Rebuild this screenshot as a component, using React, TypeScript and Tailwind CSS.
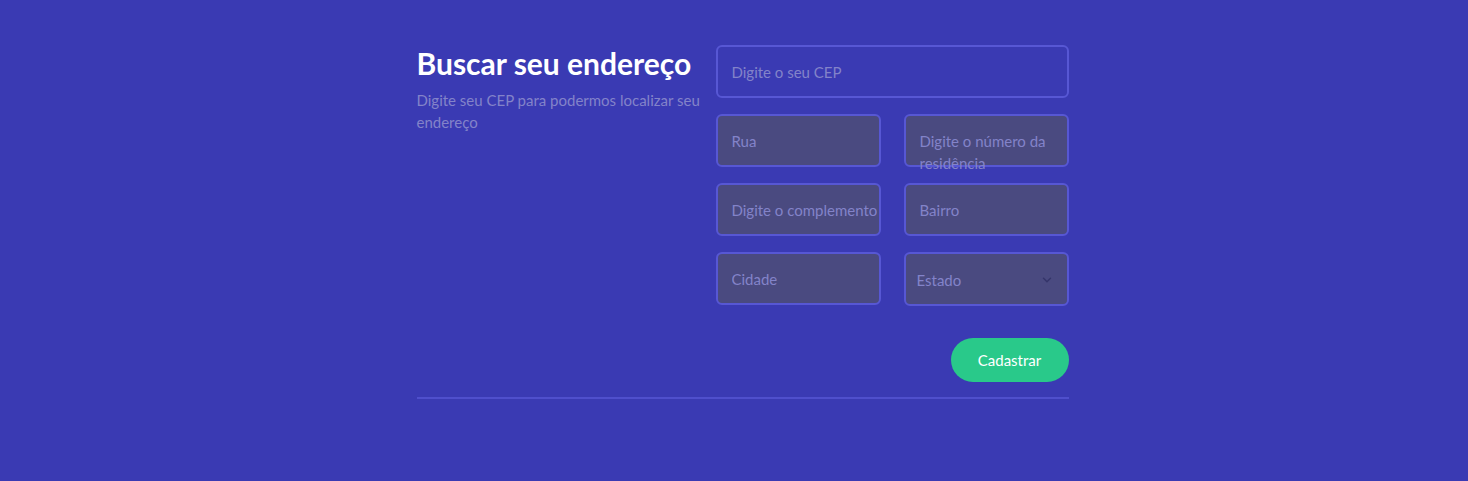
import React from 'react';

const field = 'h-[53px] rounded-md border-2 border-[#5757d4] bg-[#4a4a80] pl-[14px] pr-[2px] text-[15px] text-white placeholder:text-[#8383c9] outline-none';

const App: React.FC = () => {
  return (
    <div className="min-h-screen bg-[#3a3ab3] pl-[17px] pt-[45px] font-['Lato',sans-serif]">
      <div className="mx-auto w-[652px]">
        <div className="flex gap-[16px]">
          {/* Intro */}
          <div className="w-[283px] shrink-0">
            <h1 className="text-[30px] font-bold leading-[36px] text-white">Buscar seu endereço</h1>
            <p className="mt-[8px] w-[296px] text-[15px] leading-[22px] text-[#8383c9]">
              Digite seu CEP para podermos localizar seu endereço
            </p>
          </div>

          {/* Form */}
          <div className="flex w-[353px] flex-col gap-[16px]">
            <input
              className="h-[53px] rounded-md border-2 border-[#5757d4] bg-transparent px-[14px] text-[15px] text-white placeholder:text-[#8383c9] outline-none"
              placeholder="Digite o seu CEP"
            />
            <div className="grid grid-cols-2 gap-x-[23px] gap-y-[16px]">
              <input className={field} placeholder="Rua" />
              <div className="relative h-[53px] rounded-md border-2 border-[#5757d4] bg-[#4a4a80]">
                <span className="absolute left-[14px] top-[14px] w-[145px] text-[15px] leading-[22px] text-[#8383c9]">
                  Digite o número da residência
                </span>
              </div>
              <input className={field} placeholder="Digite o complemento" />
              <input className={field} placeholder="Bairro" />
              <input className={field} placeholder="Cidade" />
              <div className="relative h-[54px] rounded-md border-2 border-[#5757d4] bg-[#4a4a80]">
                <span className="absolute left-[11px] top-[15px] text-[15px] leading-[22px] text-[#8383c9]">Estado</span>
                <svg className="absolute right-[13px] top-[19px]" width="14" height="14" viewBox="0 0 24 24" fill="none" stroke="#35356a" strokeWidth="2.5" strokeLinecap="round" strokeLinejoin="round">
                  <path d="M6 9l6 6 6-6" />
                </svg>
              </div>
            </div>
            <div className="mt-[16px] flex justify-end">
              <button className="h-[44px] w-[118px] rounded-full bg-[#29c98a] text-[15px] text-white">Cadastrar</button>
            </div>
          </div>
        </div>
        <div className="mt-[15px] h-[2px] bg-[#4f4fcc]" />
      </div>
    </div>
  );
};

export default App;
